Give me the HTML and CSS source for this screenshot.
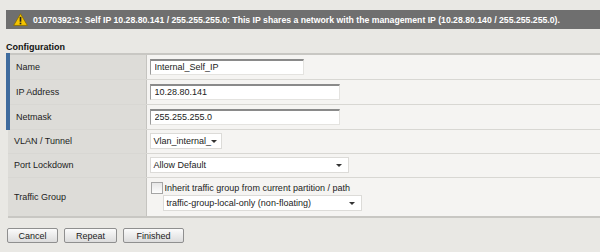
FILE: index.html
```html
<!DOCTYPE html>
<html lang="en">
<head>
    <meta charset="UTF-8">
    <title>New Self IP</title>
    <link rel="stylesheet" href="styles.css">
</head>
<body>
    <!-- Warning message -->
    <div class="banner">
        <svg class="warn-icon" width="15" height="13" viewBox="0 0 16 14">
            <path d="M8 0.8 L15.4 13.4 L0.6 13.4 Z" fill="#f4c400" stroke="#8a6d00" stroke-width="0.9" stroke-linejoin="round"/>
            <rect x="7.1" y="4.2" width="1.8" height="5.2" fill="#222"/>
            <rect x="7.1" y="10.4" width="1.8" height="1.8" fill="#222"/>
        </svg>
        <span>01070392:3: Self IP 10.28.80.141 / 255.255.255.0: This IP shares a network with the management IP (10.28.80.140 / 255.255.255.0).</span>
    </div>

    <h3 class="section-title">Configuration</h3>

    <table class="config">
        <tr class="required">
            <td class="label">Name</td>
            <td class="value"><input type="text" class="txt txt-short" value="Internal_Self_IP"></td>
        </tr>
        <tr class="required">
            <td class="label">IP Address</td>
            <td class="value"><input type="text" class="txt txt-long" value="10.28.80.141"></td>
        </tr>
        <tr class="required">
            <td class="label">Netmask</td>
            <td class="value"><input type="text" class="txt txt-long" value="255.255.255.0"></td>
        </tr>
        <tr>
            <td class="label">VLAN / Tunnel</td>
            <td class="value"><div class="select sel-vlan"><span>Vlan_internal_</span><i class="arrow"></i></div></td>
        </tr>
        <tr>
            <td class="label">Port Lockdown</td>
            <td class="value"><div class="select sel-port"><span>Allow Default</span><i class="arrow"></i></div></td>
        </tr>
        <tr class="tall">
            <td class="label">Traffic Group</td>
            <td class="value">
                <label class="check"><span class="box"></span>Inherit traffic group from current partition / path</label>
                <div class="select sel-group"><span>traffic-group-local-only (non-floating)</span><i class="arrow"></i></div>
            </td>
        </tr>
    </table>

    <div class="buttons">
        <button class="btn btn-cancel">Cancel</button>
        <button class="btn btn-repeat">Repeat</button>
        <button class="btn btn-finished">Finished</button>
    </div>
</body>
</html>
```

FILE: styles.css
```css
/* Self IP configuration page */
body {
    font-family: "Liberation Sans", Arial, sans-serif;
    font-size: 9px;
    color: #222;
    background-color: #e9e8e4;
    margin: 0;
    padding: 10px 0 0 6px;
}

.banner {
    display: flex;
    align-items: center;
    height: 19px;
    background-color: #6f6f6f;
    color: #fff;
    font-size: 8.7px;
    font-weight: bold;
    white-space: nowrap;
    overflow: hidden;
    padding-left: 7px;
}

.warn-icon {
    margin-right: 5px;
    flex-shrink: 0;
}

.section-title {
    font-size: 9px;
    font-weight: bold;
    margin: 13px 0 0 0;
    height: 10px;
    line-height: 10px;
    color: #111;
}

.config {
    border-collapse: collapse;
    width: 594px;
    margin-top: 1px;
    border-top: 2px solid #c8c7c3;
    border-bottom: 2px solid #c8c7c3;
}

.config td {
    padding: 0;
    border-bottom: 1px solid #d8d7d3;
}

.config tr {
    height: 24px;
}

.config tr.required {
    height: 25px;
}

.config tr.tall {
    height: 40px;
}

.label {
    box-sizing: border-box;
    width: 138px;
    background-color: #dddcd8;
    border-right: 1px solid #c5c4c0;
    padding-left: 6px !important;
    color: #222;
}

.required .label {
    border-left: 4px solid #3f6c9e;
    padding-left: 6px !important;
}

.value {
    background-color: #f5f4f2;
    padding-left: 3px !important;
}

.txt {
    box-sizing: border-box;
    height: 16px;
    padding: 0 4px;
    font-family: "Liberation Sans", Arial, sans-serif;
    font-size: 9px;
    color: #222;
    background: #fff;
    border: 1px solid #e4e3e0;
    border-top: 2px solid #8a8a8a;
    border-left: 1px solid #9a9a9a;
    display: block;
}

.txt-short {
    width: 154px;
}

.txt-long {
    width: 190px;
}

.select {
    box-sizing: border-box;
    display: flex;
    align-items: center;
    justify-content: space-between;
    height: 16px;
    padding: 0 6px 0 3px;
    background: #fff;
    border: 1px solid #dcdbd8;
    color: #222;
    white-space: nowrap;
}

.sel-vlan {
    width: 72px;
}

.sel-port {
    width: 199px;
}

.sel-group {
    width: 199px;
    margin: 1px 0 0 13px;
}

.arrow {
    width: 0;
    height: 0;
    border-left: 3px solid transparent;
    border-right: 3px solid transparent;
    border-top: 3px solid #333;
}

.check {
    display: flex;
    align-items: center;
    margin-left: 1px;
}

.box {
    box-sizing: border-box;
    width: 12px;
    height: 12px;
    border: 1px solid #a5a5a5;
    background: linear-gradient(#e6e6e6, #fdfdfd);
    margin-right: 2px;
}

.buttons {
    display: flex;
    gap: 6px;
    margin: 10px 0 0 1px;
}

.btn {
    box-sizing: border-box;
    height: 15px;
    padding: 0;
    font-family: "Liberation Sans", Arial, sans-serif;
    font-size: 9px;
    color: #222;
    background: linear-gradient(#fbfbfb, #dcdcdc);
    border: 1px solid #8f8f8f;
    border-radius: 2px;
    cursor: pointer;
}

.btn-cancel {
    width: 51px;
}

.btn-repeat {
    width: 53px;
}

.btn-finished {
    width: 61px;
}
```
